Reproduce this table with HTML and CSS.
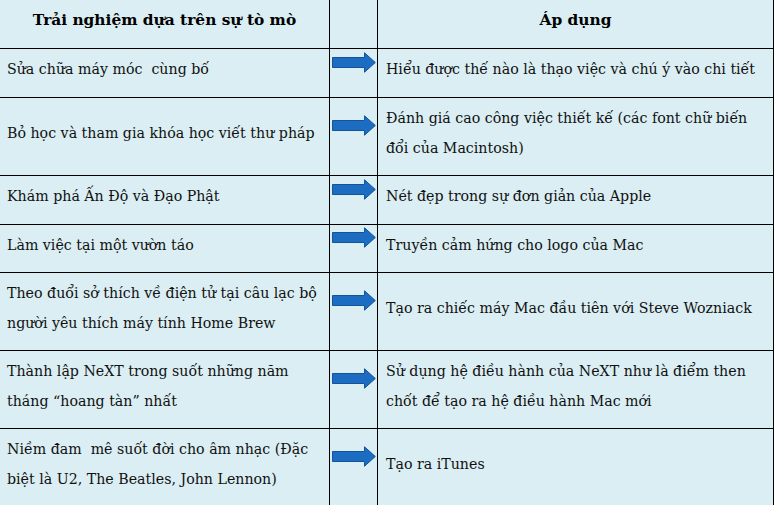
FILE: index.html
```html
<!DOCTYPE html>
<html lang="vi">
<head>
<meta charset="utf-8">
<title>Trải nghiệm và áp dụng</title>
<link rel="stylesheet" href="styles.css">
</head>
<body>
<div class="table">
  <div class="cell head left">Trải nghiệm dựa trên sự tò mò</div>
  <div class="cell head mid"></div>
  <div class="cell head right">Áp dụng</div>

  <div class="cell left">Sửa chữa máy móc&nbsp; cùng bố</div>
  <div class="cell mid"><svg class="arrow" viewBox="0 0 44 21"><path d="M0.5 5.5H32.5V0.8L43.3 10.5L32.5 20.2V15.5H0.5Z"/></svg></div>
  <div class="cell right">Hiểu được thế nào là thạo việc và chú ý vào chi tiết</div>

  <div class="cell left">Bỏ học và tham gia khóa học viết thư pháp</div>
  <div class="cell mid"><svg class="arrow" viewBox="0 0 44 21"><path d="M0.5 5.5H32.5V0.8L43.3 10.5L32.5 20.2V15.5H0.5Z"/></svg></div>
  <div class="cell right">Đánh giá cao công việc thiết kế (các font chữ biến<br>đổi của Macintosh)</div>

  <div class="cell left">Khám phá Ấn Độ và Đạo Phật</div>
  <div class="cell mid"><svg class="arrow" viewBox="0 0 44 21"><path d="M0.5 5.5H32.5V0.8L43.3 10.5L32.5 20.2V15.5H0.5Z"/></svg></div>
  <div class="cell right">Nét đẹp trong sự đơn giản của Apple</div>

  <div class="cell left">Làm việc tại một vườn táo</div>
  <div class="cell mid"><svg class="arrow" viewBox="0 0 44 21"><path d="M0.5 5.5H32.5V0.8L43.3 10.5L32.5 20.2V15.5H0.5Z"/></svg></div>
  <div class="cell right">Truyền cảm hứng cho logo của Mac</div>

  <div class="cell left">Theo đuổi sở thích về điện tử tại câu lạc bộ<br>người yêu thích máy tính Home Brew</div>
  <div class="cell mid"><svg class="arrow" viewBox="0 0 44 21"><path d="M0.5 5.5H32.5V0.8L43.3 10.5L32.5 20.2V15.5H0.5Z"/></svg></div>
  <div class="cell right">Tạo ra chiếc máy Mac đầu tiên với Steve Wozniack</div>

  <div class="cell left">Thành lập NeXT trong suốt những năm<br>tháng “hoang tàn” nhất</div>
  <div class="cell mid"><svg class="arrow" viewBox="0 0 44 21"><path d="M0.5 5.5H32.5V0.8L43.3 10.5L32.5 20.2V15.5H0.5Z"/></svg></div>
  <div class="cell right">Sử dụng hệ điều hành của NeXT như là điểm then<br>chốt để tạo ra hệ điều hành Mac mới</div>

  <div class="cell left">Niềm đam&nbsp; mê suốt đời cho âm nhạc (Đặc<br>biệt là U2, The Beatles, John Lennon)</div>
  <div class="cell mid"><svg class="arrow" viewBox="0 0 44 21"><path d="M0.5 5.5H32.5V0.8L43.3 10.5L32.5 20.2V15.5H0.5Z"/></svg></div>
  <div class="cell right">Tạo ra iTunes</div>
</div>
</body>
</html>
```
FILE: styles.css
```css
html, body {
  margin: 0;
  padding: 0;
  background: #daeef3;
}
.table {
  display: grid;
  grid-template-columns: 329px 47px 395px;
  grid-template-rows: 48px 48px 77px 48px 47px 77px 77px 77px;
  gap: 1px;
  background: #000;
  padding-right: 1px;
  width: 773px;
  font-family: "DejaVu Serif", "Liberation Serif", serif;
  font-size: 14.2px;
  line-height: 30px;
  color: #111;
}
.cell {
  background: #daeef3;
  display: flex;
  align-items: center;
  white-space: nowrap;
  padding: 4px 4px 12px 7px;
  overflow: hidden;
}
.cell.right {
  padding-left: 8px;
}
.cell.mid {
  padding: 0 0 22px 2px;
}
.cell.head {
  font-weight: bold;
  font-size: 15.4px;
  justify-content: center;
  padding: 4px 0 12px 0;
  color: #000;
}
.arrow {
  display: block;
  width: 44px;
  height: 21px;
}
.arrow path {
  fill: #1c6dc2;
  stroke: #12549c;
  stroke-width: 1;
}
```
